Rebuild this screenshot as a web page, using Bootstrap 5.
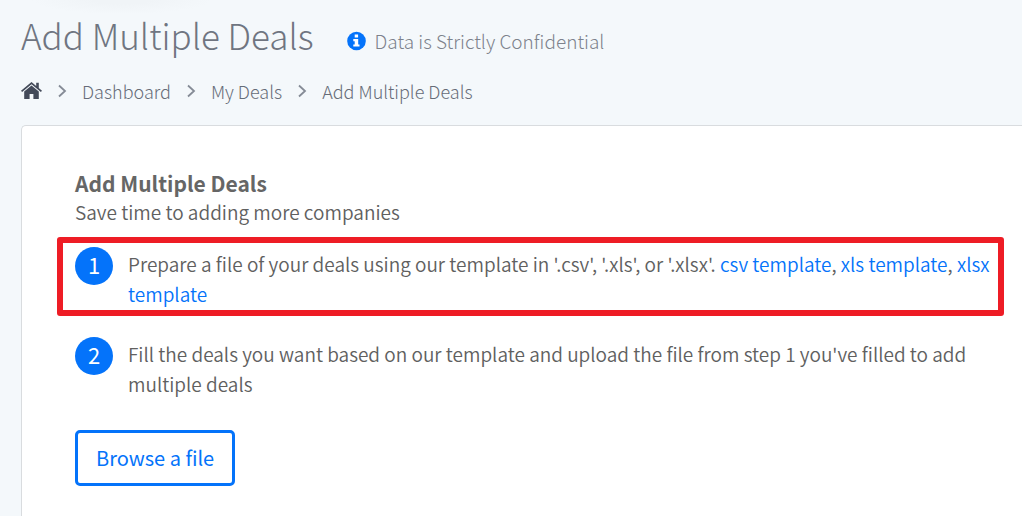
<!DOCTYPE html>
<html lang="en">
<head>
<meta charset="utf-8">
<meta name="viewport" content="width=device-width, initial-scale=1">
<title>Add Multiple Deals</title>
<link href="https://cdn.jsdelivr.net/npm/bootstrap@5.3.0/dist/css/bootstrap.min.css" rel="stylesheet">
<style>
  body { background: #f4f8fb; color: #606060; font-family: "Source Sans Pro", "Noto Sans CJK SC", sans-serif; font-size: 19px; font-weight: 350; line-height: 30px; overflow: hidden; }
  a { color: #0473fa; text-decoration: none; }
  .page { padding: 5px 0 0 21px; min-height: 100vh; background: radial-gradient(ellipse 90px 14px at 122px 0, #f0f4f7 30%, #f4f8fb 100%) no-repeat; }
  .page-title { font-size: 35px; font-weight: 300; line-height: 60px; color: #6f7581; }
  .notice { font-weight: 300; color: #7d828c; padding-top: 12px; gap: 9px; }
  .crumbs { font-size: 18px; font-weight: 300; line-height: 30px; padding-top: 11px; margin-bottom: 19px; }
  .crumbs a, .crumbs span { color: #666c78; }
  .crumbs ol { gap: 15px; }
  .panel { border: 1px solid #d9dcdf; border-right: 0; border-bottom: 0; border-radius: 5px 0 0 0; padding: 42px 18px 30px 35px; }
  .panel-head { padding-left: 18px; margin-bottom: 12px; }
  .panel-head h2 { font-size: 21px; line-height: 30px; font-weight: 700; color: #666; }
  .panel-head p { line-height: 27px; }
  .step { border: 6px solid transparent; border-radius: 3px; padding: 4px 6px 1px 12px; gap: 15px; }
  .step + .step { margin-top: 11px; }
  .step p { padding-top: 2px; }
  .step-marked { border-color: #ee1c25; }
  .step-no { width: 38px; height: 38px; background: #0473fa; font-size: 22px; font-weight: 400; line-height: 35px; }
  .btn-browse { --bs-btn-color: #0473fa; --bs-btn-border-color: #0473fa; --bs-btn-hover-bg: #0473fa; --bs-btn-hover-color: #fff; background: #fff; border-width: 3px; border-radius: 5px; font-size: 20px; font-weight: 400; line-height: 30px; padding: 10px 18px; margin: 24px 0 0 18px; }
</style>
</head>
<body>
<main class="page d-flex flex-column">
  <header class="d-flex align-items-center">
    <h1 class="page-title mb-0">Add Multiple Deals</h1>
    <p class="notice d-flex align-items-center mb-0 ms-4 ps-2">
      <svg width="20" height="20" viewBox="0 0 20 20" aria-hidden="true"><circle cx="10.500" cy="10" r="9.300" fill="#0473fa"/><path d="M8.700 3.600h3.400v2.900H8.700zM7.300 8h4.900v5.400h1.300v2.200H7.300v-2.200h1.400v-3.200H7.300z" fill="#fff"/></svg>
      Data is Strictly Confidential
    </p>
  </header>
  <nav class="crumbs" aria-label="Breadcrumb">
    <ol class="list-unstyled d-flex align-items-center mb-0">
      <li class="d-flex"><a href="#" aria-label="Home" class="d-flex"><svg width="21" height="18" viewBox="0 0 21 18"><path fill="#434a59" d="M10.500 0 0 8.800l1.100 1.300 9.400-7.900 9.400 7.900L21 8.800l-3.200-2.700V.7h-2.600v3.200z"/><path fill="#434a59" d="M10.500 3.500 3.200 9.600V17h5.400v-5h3.800v5h5.400V9.600z"/></svg></a></li>
      <li class="d-flex"><svg width="10" height="14" viewBox="0 0 10 14" fill="none" stroke="#858b96" stroke-width="1.800"><path d="m2 1.500 6 5.500-6 5.500"/></svg></li>
      <li><a href="#">Dashboard</a></li>
      <li class="d-flex"><svg width="10" height="14" viewBox="0 0 10 14" fill="none" stroke="#858b96" stroke-width="1.800"><path d="m2 1.500 6 5.500-6 5.500"/></svg></li>
      <li><a href="#">My Deals</a></li>
      <li class="d-flex"><svg width="10" height="14" viewBox="0 0 10 14" fill="none" stroke="#858b96" stroke-width="1.800"><path d="m2 1.500 6 5.500-6 5.500"/></svg></li>
      <li aria-current="page"><span>Add Multiple Deals</span></li>
    </ol>
  </nav>
  <section class="panel bg-white flex-grow-1">
    <div class="panel-head">
      <h2 class="mb-0">Add Multiple Deals</h2>
      <p class="mb-0">Save time to adding more companies</p>
    </div>
    <div class="step step-marked d-flex">
      <span class="step-no rounded-circle text-white text-center flex-shrink-0">1</span>
      <p class="mb-0">Prepare a file of your deals using our template in '.csv', '.xls', or '.xlsx'. <a href="#">csv template</a>, <a href="#">xls template</a>, <a href="#">xlsx template</a></p>
    </div>
    <div class="step d-flex">
      <span class="step-no rounded-circle text-white text-center flex-shrink-0">2</span>
      <p class="mb-0">Fill the deals you want based on our template and upload the file from step 1 you've filled to add multiple deals</p>
    </div>
    <button type="button" class="btn btn-browse">Browse a file</button>
  </section>
</main>
<script src="https://cdn.jsdelivr.net/npm/bootstrap@5.3.0/dist/js/bootstrap.bundle.min.js"></script>
</body>
</html>
